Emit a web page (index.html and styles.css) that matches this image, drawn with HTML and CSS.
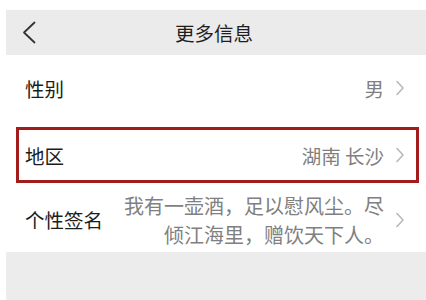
FILE: index.html
```html
<!DOCTYPE html>
<html lang="zh-CN">
<head>
<meta charset="utf-8">
<title>更多信息</title>
<link rel="stylesheet" href="styles.css">
</head>
<body>
<div class="page">
  <header class="header">
    <svg class="back" width="14" height="23" viewBox="0 0 14 23" aria-hidden="true">
      <path d="M12.5 1.5 L2 11.5 L12.5 21.5" fill="none" stroke="#333" stroke-width="1.8" stroke-linecap="round" stroke-linejoin="round"/>
    </svg>
    <h1 class="title">更多信息</h1>
  </header>
  <main class="list">
    <div class="row row-first">
      <span class="label">性别</span>
      <span class="value">男</span>
      <svg class="chev" width="10" height="16" viewBox="0 0 10 16" aria-hidden="true"><path d="M2 1.5 L8 8 L2 14.5" fill="none" stroke="#b8b8b8" stroke-width="1.6" stroke-linecap="round" stroke-linejoin="round"/></svg>
    </div>
    <div class="row row-marked">
      <span class="label">地区</span>
      <span class="value">湖南 长沙</span>
      <svg class="chev" width="10" height="16" viewBox="0 0 10 16" aria-hidden="true"><path d="M2 1.5 L8 8 L2 14.5" fill="none" stroke="#b8b8b8" stroke-width="1.6" stroke-linecap="round" stroke-linejoin="round"/></svg>
    </div>
    <div class="row row-sign">
      <span class="label">个性签名</span>
      <span class="value value-multi">我有一壶酒，足以慰风尘。尽倾江海里，赠饮天下人。</span>
      <svg class="chev" width="10" height="16" viewBox="0 0 10 16" aria-hidden="true"><path d="M2 1.5 L8 8 L2 14.5" fill="none" stroke="#b8b8b8" stroke-width="1.6" stroke-linecap="round" stroke-linejoin="round"/></svg>
    </div>
  </main>
  <div class="footer-gap"></div>
</div>
</body>
</html>
```
FILE: styles.css
```css
html, body {
  margin: 0;
  padding: 0;
  background: #ffffff;
}
body {
  font-family: "Noto Sans CJK SC", "Noto Sans", sans-serif;
  width: 426px;
  height: 300px;
  overflow: hidden;
}
.page {
  padding: 10px 0 0 6px;
  display: flex;
  flex-direction: column;
  height: 290px;
}
.header {
  height: 45px;
  background: #ebebeb;
  display: flex;
  align-items: center;
  justify-content: center;
  position: relative;
  flex: none;
}
.back {
  position: absolute;
  left: 16px;
  top: 11px;
}
.title {
  margin: 0 0 0 -4px;
  font-size: 19.5px;
  font-weight: normal;
  color: #1e1e1e;
  line-height: 1;
}
.list {
  padding: 5px 7px 0 10px;
  flex: none;
}
.row {
  display: flex;
  align-items: center;
  border: 3px solid transparent;
  padding: 0 11px 0 6px;
  box-sizing: border-box;
  height: 56px;
}
.row-first {
  margin-bottom: 11px;
}
.row-marked {
  border-color: #a31c1c;
}
.row-sign {
  height: 69px;
  padding-top: 4px;
}
.label {
  font-size: 19.5px;
  color: #1c1c1c;
  flex: none;
}
.value {
  margin-left: auto;
  font-size: 19.5px;
  color: #808080;
  text-align: right;
}
.value-multi {
  font-size: 20px;
  width: calc(13em + 1px);
  line-height: 29px;
}
.chev {
  flex: none;
  margin-left: 11px;
}
.footer-gap {
  flex: 1;
  background: #ececec;
}
```
